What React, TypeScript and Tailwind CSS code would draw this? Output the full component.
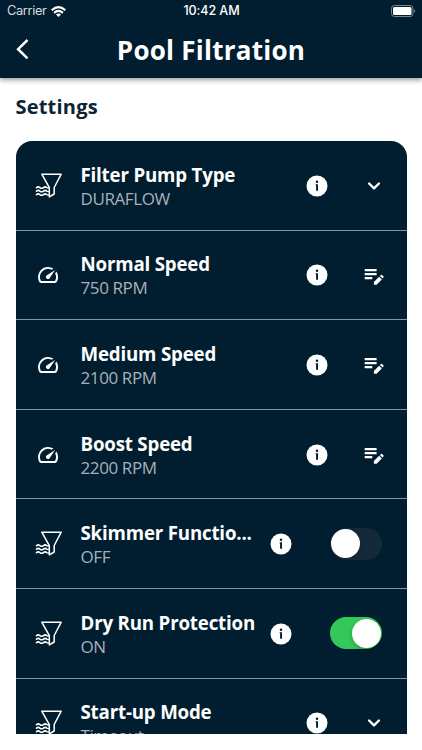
import React from 'react';
import { MdSpeed } from 'react-icons/md';

type Control = 'select' | 'edit' | 'off' | 'on';
interface Row {
  icon: 'filter' | 'speed';
  title: string;
  value: string;
  control: Control;
}

const rows: Row[] = [
  { icon: 'filter', title: 'Filter Pump Type', value: 'DURAFLOW', control: 'select' },
  { icon: 'speed', title: 'Normal Speed', value: '750 RPM', control: 'edit' },
  { icon: 'speed', title: 'Medium Speed', value: '2100 RPM', control: 'edit' },
  { icon: 'speed', title: 'Boost Speed', value: '2200 RPM', control: 'edit' },
  { icon: 'filter', title: 'Skimmer Functio...', value: 'OFF', control: 'off' },
  { icon: 'filter', title: 'Dry Run Protection', value: 'ON', control: 'on' },
  { icon: 'filter', title: 'Start-up Mode', value: 'Timeout', control: 'select' },
];

function FilterIcon() {
  return (
    <svg className="mt-px" width="28" height="28" viewBox="0 0 28 28" fill="none" stroke="white" strokeWidth="1.5" strokeLinejoin="round" strokeLinecap="round">
      <path d="M7.8 2.2H27.2L20.2 15.5V22L15.3 24.9V15.6Z" />
      {[15.8, 19.3, 22.8].map((y) => (
        <path key={y} strokeWidth="1.5" d={`M2.4 ${y}C3.6 ${y - 1.2} 4.7 ${y - 1.2} 5.9 ${y - 0.2}S8.2 ${y + 0.8} 9.4 ${y - 0.2}S11.7 ${y - 1.2} 12.7 ${y - 0.2}L14.2 ${y + 0.2}`} />
      ))}
    </svg>
  );
}

function InfoIcon() {
  return (
    <svg width="22" height="22" viewBox="0 0 22 22">
      <circle cx="11" cy="11" r="10.5" fill="white" />
      <circle cx="11" cy="6.7" r="1.25" fill="#001e30" />
      <path d="M9.7 9.3H12V15.8H10.1V10.5H9.7Z" fill="#001e30" />
    </svg>
  );
}

function EditIcon() {
  return (
    <svg width="20" height="18" viewBox="0 0 20 18" fill="none" stroke="white" strokeWidth="2.1">
      <path d="M.7 2.1H12.6M.7 6.1H12.6M.7 10.1H8.3" />
      <path d="M9.9 16.7V14L15.1 8.8L17.8 11.5L12.6 16.7ZM15.9 8L17 6.9Q17.5 6.5 18 6.9L19.4 8.3Q19.9 8.8 19.4 9.4L18.5 10.6Z" fill="white" stroke="none" />
    </svg>
  );
}

function Toggle({ on }: { on: boolean }) {
  return (
    <div className={`flex h-8 w-[52px] items-center rounded-full px-px ${on ? 'justify-end bg-[#34c759]' : 'bg-[#152a39]'}`}>
      <div className="size-[29px] rounded-full bg-white shadow-[0_2px_4px_rgba(0,0,0,0.2)]" />
    </div>
  );
}

function SettingRow({ row }: { row: Row }) {
  const toggle = row.control === 'on' || row.control === 'off';
  return (
    <div className={`flex h-[89.6px] shrink-0 items-center border-b border-[#8795a1] pl-[18px] ${toggle ? 'pr-[25px]' : 'pr-6'}`}>
      <div className="flex w-7 shrink-0 justify-center">
        {row.icon === 'filter' ? <FilterIcon /> : <MdSpeed className="mt-px size-6 text-white" />}
      </div>
      <div className="ml-[19px] min-w-0 flex-1 pt-[3px] whitespace-nowrap">
        <div className="text-[18.7px] leading-6 font-bold tracking-[-0.18px] text-white">{row.title}</div>
        <div className="text-[17px] leading-6 tracking-[-0.4px] text-[#a9b0b8]">{row.value}</div>
      </div>
      <div className={`shrink-0 pt-px ${toggle ? 'ml-[14px]' : 'ml-4'}`}><InfoIcon /></div>
      <div className={`flex shrink-0 justify-end ${toggle ? 'w-[90px]' : 'w-[55px]'}`}>
        {row.control === 'select' && (
          <svg className="mt-px mr-0.5" width="14" height="10" viewBox="0 0 14 10" fill="none" stroke="white" strokeWidth="2.4" strokeLinecap="round" strokeLinejoin="round">
            <path d="M2.1 2.5L7 7.3L11.9 2.5" />
          </svg>
        )}
        {row.control === 'edit' && <div className="-mr-px pt-1"><EditIcon /></div>}
        {toggle && <Toggle on={row.control === 'on'} />}
      </div>
    </div>
  );
}

export default function App() {
  return (
    <div className="flex h-[750px] w-[422px] flex-col overflow-hidden bg-white font-['Open_Sans','Noto_Sans',sans-serif]">
      <header className="h-[78px] shrink-0 bg-[#001e30] text-white shadow-[0_2px_5px_rgba(0,0,0,0.4)]">
        <div className="grid h-[22px] grid-cols-3 items-center pr-[6px] pl-[7px] font-['Inter',sans-serif] text-[13px]">
          <div className="flex items-center gap-1">
            <span className="text-[12.8px] tracking-[-0.35px] text-[#d5dce1]">Carrier</span>
            <svg width="15" height="11" viewBox="0 0 15 11" fill="none" stroke="white" strokeWidth="2.1">
              <path d="M.7 4.2Q7.5 -2 14.3 4.2M3.1 6.9Q7.5 3 11.9 6.9" />
              <path d="M5 8.5Q7.5 6.4 10 8.5L7.5 11Z" fill="white" stroke="none" />
            </svg>
          </div>
          <span className="pt-px text-center text-[12.6px] font-medium tracking-[-0.1px] whitespace-nowrap">10:42 AM</span>
          <svg className="justify-self-end" width="25" height="12" viewBox="0 0 25 12">
            <rect x=".5" y=".5" width="21.5" height="11" rx="3" fill="none" stroke="#798791" />
            <rect x="2" y="2" width="18.5" height="8" rx="1.5" fill="white" />
            <path d="M23.2 4.2Q25.4 6 23.2 7.8Z" fill="#798791" />
          </svg>
        </div>
        <div className="grid h-14 grid-cols-[48px_1fr_48px] items-center">
          <svg className="ml-[14px]" width="16" height="22" viewBox="0 0 16 22" fill="none" stroke="white" strokeWidth="2.5">
            <path d="M13.5 1L4.1 10.2L13.5 19.4" />
          </svg>
          <h1 className="text-center text-[26px] leading-8 font-bold tracking-[0.25px] whitespace-nowrap">Pool Filtration</h1>
        </div>
      </header>
      <main className="flex min-h-0 flex-1 flex-col px-[15.5px] pb-4">
        <h2 className="mt-[14px] mb-[19px] text-xl leading-[30px] font-bold tracking-[0.2px] text-[#0b2335]">Settings</h2>
        <section className="flex min-h-0 flex-1 flex-col overflow-hidden rounded-t-2xl bg-[#001e30]">
          {rows.map((row) => <SettingRow key={row.title} row={row} />)}
        </section>
      </main>
    </div>
  );
}
